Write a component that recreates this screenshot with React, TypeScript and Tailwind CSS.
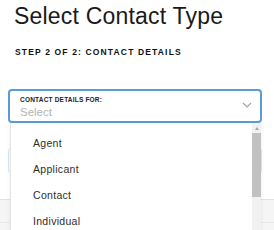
import React from "react";

const items = ["Agent", "Applicant", "Contact", "Individual"];

export default function App() {
  return (
    <div
      className="relative h-[230px] w-[274px] overflow-hidden bg-white text-[#1a1a1a]"
      style={{ fontFamily: '"Liberation Sans", Arial, sans-serif' }}
    >
      {/* Header */}
      <h1 className="pl-[14px] pt-[3px] text-[23px] leading-[26px] font-normal tracking-[0.2px]">
        Select Contact Type
      </h1>
      <p className="mt-[18px] pl-[15px] text-[8.5px] leading-[10px] font-bold tracking-[1.15px] text-[#111]">
        STEP 2 OF 2: CONTACT DETAILS
      </p>

      {/* Select field */}
      <div className="relative ml-[8px] mt-[32px] h-[34px] w-[254px] rounded-[4px] border-2 border-[#5a9ad8] bg-white px-[10px] pt-[5px]">
        <div className="text-[6.5px] leading-[8px] font-bold tracking-[0.2px] text-[#222]">
          CONTACT DETAILS FOR:
        </div>
        <div className="mt-[1px] text-[11.5px] leading-[14px] text-[#b4b4b4]">Select</div>
        <svg
          className="absolute right-[8px] top-[11px] h-[6px] w-[10px]"
          viewBox="0 0 10 6"
          fill="none"
          stroke="#9aa5b1"
          strokeWidth="1.1"
        >
          <path d="M1 1l4 4 4-4" />
        </svg>
      </div>

      {/* Content behind the dropdown */}
      <div className="ml-[8px] mt-[25px] h-[25px] w-[254px] rounded-[3px] border border-[#d6e8f7]" />
      <div className="mt-[26px] h-[40px] border-t border-[#e2e2e2] bg-[#f5f5f5]">
        <div className="mt-[22px] border-t border-[#e8e8e8]" />
      </div>

      {/* Dropdown list */}
      <div className="absolute left-[10px] top-[123px] flex h-[120px] w-[251px] border-l border-[#e4e4e4] bg-white shadow-[0_2px_4px_rgba(0,0,0,0.08)]">
        <ul className="flex-1 pl-[22px] pt-[13px]">
          {items.map((item) => (
            <li key={item} className="h-[26px] text-[10.5px] leading-[14px] tracking-[0.3px] text-[#2e2e2e]">
              {item}
            </li>
          ))}
        </ul>
        {/* Scrollbar */}
        <div className="flex w-[9px] flex-col bg-[#f1f1f1]">
          <div className="flex h-[10px] items-center justify-center">
            <div className="h-0 w-0 border-x-[2.5px] border-b-[3px] border-x-transparent border-b-[#a3a3a3]" />
          </div>
          <div className="h-[64px] bg-[#c1c1c1]" />
        </div>
      </div>
    </div>
  );
}
